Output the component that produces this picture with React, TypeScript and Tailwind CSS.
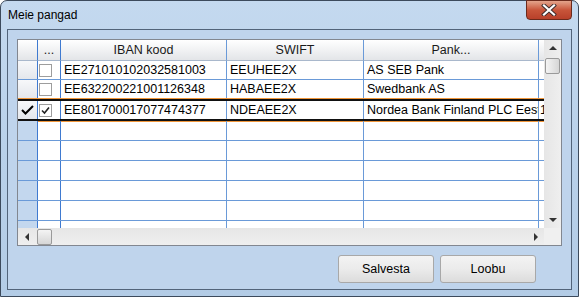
import React from "react";

type Row = { iban: string; swift: string; bank: string; extra?: string; checked?: boolean; current?: boolean };

const rows: Row[] = [
  { iban: "EE271010102032581003", swift: "EEUHEE2X", bank: "AS SEB Pank" },
  { iban: "EE632200221001126348", swift: "HABAEE2X", bank: "Swedbank AS" },
  { iban: "EE801700017077474377", swift: "NDEAEE2X", bank: "Nordea Bank Finland PLC Eesti filiaal", extra: "1", checked: true, current: true },
];

const EMPTY_ROWS = 6;

function CheckBox({ checked }: { checked?: boolean }) {
  return (
    <div className="w-[13px] h-[13px] border border-[#9d9d9d] bg-white flex items-center justify-center">
      {checked && (
        <svg width="9" height="9" viewBox="0 0 9 9">
          <path d="M1 4.5 L3.5 7 L8 1.5" fill="none" stroke="#222" strokeWidth="1.6" />
        </svg>
      )}
    </div>
  );
}

function HeaderCell({ children, className = "" }: { children?: React.ReactNode; className?: string }) {
  return (
    <div
      className={`h-[21px] flex items-center justify-center border-r border-b border-[#a9b8cc] bg-gradient-to-b from-[#ffffff] to-[#e3e5e8] text-[12.5px] text-[#1a1a1a] ${className}`}
    >
      {children}
    </div>
  );
}

export default function App() {
  return (
    <div className="w-[579px] h-[297px] overflow-hidden bg-white" style={{ fontFamily: '"Liberation Sans", Arial, sans-serif' }}>
      <div className="relative w-[579px] h-[297px] rounded-t-[7px] border border-[#3c4a5c] bg-gradient-to-b from-[#c4d9ef] via-[#b9d1ea] to-[#b3cce6] flex flex-col">
        {/* title bar */}
        <div className="h-[28px] flex items-center pl-[7px] text-[12px] text-black">
          <span className="mt-[-1px]">Meie pangad</span>
        </div>
        {/* close button */}
        <div className="absolute right-[6px] top-[-1px] w-[46px] h-[20px] rounded-b-[4px] border border-[#6b2a1c] bg-gradient-to-b from-[#e3a48c] via-[#c8553a] to-[#b8402a] flex items-center justify-center">
          <svg width="16" height="12" viewBox="0 0 16 12">
            <path d="M3 1.5 L13 10.5 M13 1.5 L3 10.5" stroke="#3a2a2a" strokeWidth="4" strokeLinecap="square" />
            <path d="M3 1.5 L13 10.5 M13 1.5 L3 10.5" stroke="#ffffff" strokeWidth="2.2" strokeLinecap="square" />
          </svg>
        </div>

        {/* client area */}
        <div className="mx-[6px] mb-[6px] flex-1 border border-[#52647a] bg-[#bfd4ec] flex flex-col pl-[9px] pt-[9px]">
          {/* grid */}
          <div className="w-[545px] h-[207px] border border-[#828790] bg-white flex">
            <div className="flex flex-col w-[526px]">
              <div className="flex-1 overflow-hidden">
                <div className="grid grid-cols-[20px_23px_166px_137px_175px_5px]">
                  <HeaderCell className="border-r-[#3f7ad0]" />
                  <HeaderCell className="border-r-[#3f7ad0]">...</HeaderCell>
                  <HeaderCell className="border-r-[#6a9ad8]">IBAN kood</HeaderCell>
                  <HeaderCell className="border-r-[#6a9ad8]">SWIFT</HeaderCell>
                  <HeaderCell className="border-r-[#6a9ad8]">Pank...</HeaderCell>
                  <HeaderCell className="border-r-0" />
                </div>
                {rows.map((r, i) => (
                  <div
                    key={i}
                    className={`grid grid-cols-[20px_23px_166px_137px_175px_5px] text-[12.5px] text-black ${
                      r.current ? "h-[22px] border-y-2 border-y-[#111] shadow-[0_-1px_0_#f0963a,0_1px_0_#f0963a]" : "h-[19px] border-b border-[#6a9ad8]"
                    }`}
                  >
                    <div className="border-r border-[#3f7ad0] bg-gradient-to-b from-[#f7f8fa] to-[#e4e7ec] flex items-center justify-center">
                      {r.current && (
                        <svg width="13" height="10" viewBox="0 0 13 10">
                          <path d="M1 5 L4.5 8.5 L12 1" fill="none" stroke="#000" strokeWidth="2" />
                        </svg>
                      )}
                    </div>
                    <div className="border-r border-[#3f7ad0] flex items-center pl-[1px]">
                      <CheckBox checked={r.checked} />
                    </div>
                    <div className="border-r border-[#6a9ad8] flex items-center pl-[3px] pt-[1px] whitespace-nowrap overflow-hidden">{r.iban}</div>
                    <div className="border-r border-[#6a9ad8] flex items-center pl-[3px] pt-[1px] whitespace-nowrap overflow-hidden">{r.swift}</div>
                    <div className="border-r border-[#6a9ad8] flex items-center pl-[3px] pt-[1px] whitespace-nowrap overflow-hidden">{r.bank}</div>
                    <div className="flex items-center pl-[1px] pt-[1px] overflow-hidden">{r.extra}</div>
                  </div>
                ))}
                {Array.from({ length: EMPTY_ROWS }).map((_, i) => (
                  <div key={`e${i}`} className="grid grid-cols-[20px_23px_166px_137px_175px_5px] h-[20px] border-b border-[#6a9ad8]">
                    <div className="border-r border-[#3f7ad0] bg-[#c3d7ee]" />
                    <div className="border-r border-[#3f7ad0]" />
                    <div className="border-r border-[#6a9ad8]" />
                    <div className="border-r border-[#6a9ad8]" />
                    <div className="border-r border-[#6a9ad8]" />
                    <div />
                  </div>
                ))}
              </div>
              {/* horizontal scrollbar */}
              <div className="h-[17px] bg-gradient-to-b from-[#e6e6e6] to-[#efefef] flex items-center">
                <div className="w-[19px] h-[17px] flex items-center justify-center">
                  <svg width="5" height="8" viewBox="0 0 5 8">
                    <path d="M4 0 L0 4 L4 8 Z" fill="#333" />
                  </svg>
                </div>
                <div className="w-[15px] h-[16px] rounded-[2px] border border-[#9a9a9a] bg-gradient-to-b from-[#f4f4f4] to-[#d6d6d6]" />
                <div className="flex-1" />
                <div className="w-[17px] h-[17px] flex items-center justify-center">
                  <svg width="5" height="8" viewBox="0 0 5 8">
                    <path d="M1 0 L5 4 L1 8 Z" fill="#333" />
                  </svg>
                </div>
              </div>
            </div>
            {/* vertical scrollbar */}
            <div className="w-[17px] flex flex-col bg-gradient-to-r from-[#e6e6e6] to-[#efefef]">
              <div className="h-[17px] flex items-center justify-center">
                <svg width="8" height="5" viewBox="0 0 8 5">
                  <path d="M0 4 L4 0 L8 4 Z" fill="#333" />
                </svg>
              </div>
              <div className="mx-[1px] mt-[1px] h-[16px] rounded-[2px] border border-[#9a9a9a] bg-gradient-to-r from-[#f4f4f4] to-[#d6d6d6]" />
              <div className="flex-1" />
              <div className="h-[17px] flex items-center justify-center">
                <svg width="8" height="5" viewBox="0 0 8 5">
                  <path d="M0 1 L8 1 L4 5 Z" fill="#333" />
                </svg>
              </div>
              <div className="h-[17px] bg-[#f0f0f0]" />
            </div>
          </div>

          {/* buttons */}
          <div className="flex justify-end gap-[6px] mt-[9px] pr-[35px]">
            <button className="w-[96px] h-[28px] rounded-[3px] border border-[#a8a8a8] bg-gradient-to-b from-[#f3f3f3] via-[#ebebeb] to-[#dcdcdc] text-[12.5px] text-black">
              Salvesta
            </button>
            <button className="w-[96px] h-[28px] rounded-[3px] border border-[#a8a8a8] bg-gradient-to-b from-[#f3f3f3] via-[#ebebeb] to-[#dcdcdc] text-[12.5px] text-black">
              Loobu
            </button>
          </div>
        </div>
      </div>
    </div>
  );
}
